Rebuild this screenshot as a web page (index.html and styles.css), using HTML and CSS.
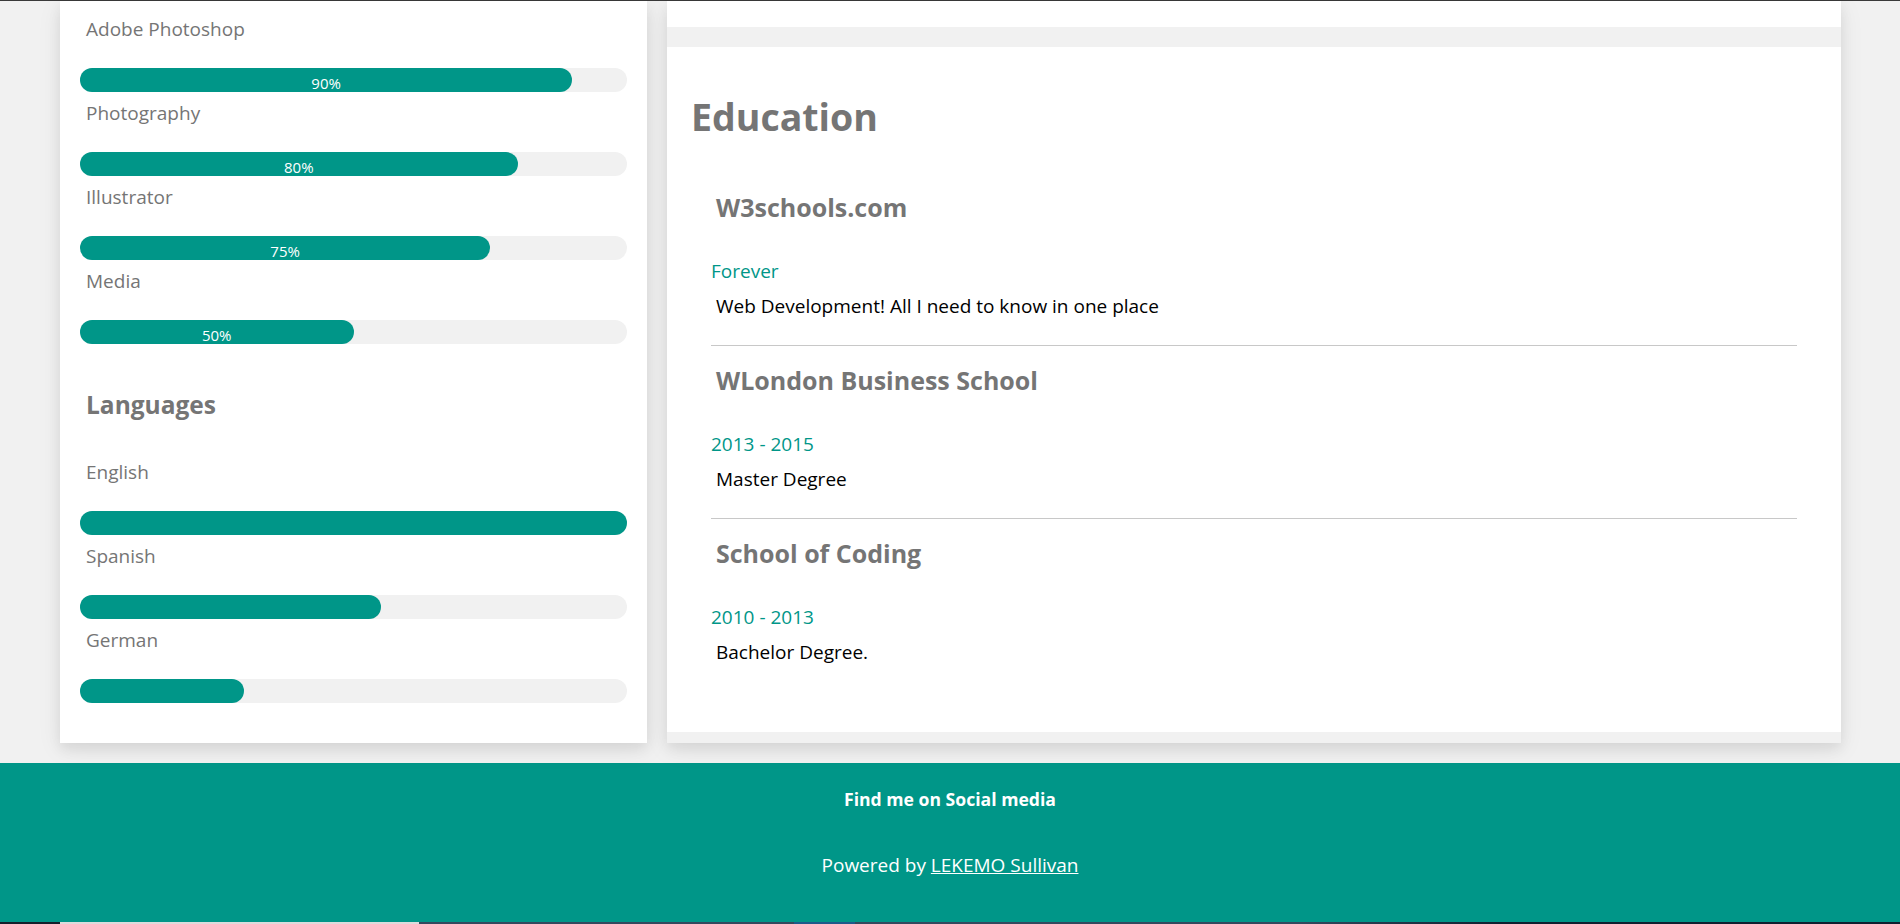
FILE: index.html
```html
<!DOCTYPE html>
<html lang="en">
<head>
<meta charset="utf-8">
<title>CV</title>
<link rel="stylesheet" href="styles.css">
</head>
<body>
<div class="topline"></div>
<main class="page">
  <section class="card side">
    <div class="skill">
      <p class="label">Adobe Photoshop</p>
      <div class="track"><div class="fill" style="width:90%">90%</div></div>
    </div>
    <div class="skill">
      <p class="label">Photography</p>
      <div class="track"><div class="fill" style="width:80%">80%</div></div>
    </div>
    <div class="skill">
      <p class="label">Illustrator</p>
      <div class="track"><div class="fill" style="width:75%">75%</div></div>
    </div>
    <div class="skill">
      <p class="label">Media</p>
      <div class="track"><div class="fill" style="width:50%">50%</div></div>
    </div>

    <h3 class="side-title">Languages</h3>
    <div class="skill">
      <p class="label">English</p>
      <div class="track"><div class="fill" style="width:100%"></div></div>
    </div>
    <div class="skill">
      <p class="label">Spanish</p>
      <div class="track"><div class="fill" style="width:55%"></div></div>
    </div>
    <div class="skill">
      <p class="label">German</p>
      <div class="track"><div class="fill" style="width:30%"></div></div>
    </div>
  </section>

  <section class="main-col">
    <div class="card-tail"></div>
    <div class="edu">
      <h2 class="edu-title">Education</h2>
      <div class="entries">
        <article class="entry">
          <h5 class="entry-title">W3schools.com</h5>
          <p class="date">Forever</p>
          <p class="desc">Web Development! All I need to know in one place</p>
        </article>
        <hr class="sep">
        <article class="entry">
          <h5 class="entry-title">WLondon Business School</h5>
          <p class="date">2013 - 2015</p>
          <p class="desc">Master Degree</p>
        </article>
        <hr class="sep">
        <article class="entry">
          <h5 class="entry-title">School of Coding</h5>
          <p class="date">2010 - 2013</p>
          <p class="desc">Bachelor Degree.</p>
        </article>
      </div>
    </div>
  </section>
</main>

<footer class="footer">
  <p class="find">Find me on Social media</p>
  <p class="powered">Powered by <a href="#" class="author">LEKEMO Sullivan</a></p>
</footer>
<div class="taskbar"></div>
</body>
</html>
```

FILE: styles.css
```css
* { box-sizing: border-box; }

html, body {
  margin: 0;
  padding: 0;
}

body {
  background: #f1f1f1;
  font-family: "Open Sans", "Segoe UI", Arial, sans-serif;
  font-size: 19px;
  color: #757575;
  overflow: hidden;
}

.topline {
  height: 1px;
  background: #3a3a3a;
}

.page {
  display: grid;
  grid-template-columns: 587px 1174px;
  column-gap: 20px;
  padding-left: 60px;
  align-items: start;
}

.card {
  background: #fff;
  box-shadow: 0 6px 12px 0 rgba(0,0,0,0.07), 0 6px 24px 0 rgba(0,0,0,0.07);
}

/* Left column */
.side {
  padding: 14px 20px 40px;
}

.label {
  margin: 0 0 25px;
  padding-left: 6px;
  font-size: 19px;
  line-height: 28px;
  color: #757575;
}

.skill + .skill .label {
  margin-top: 7px;
}

.track {
  height: 24px;
  background: #f1f1f1;
  border-radius: 12px;
}

.fill {
  height: 24px;
  background: #009688;
  border-radius: 12px;
  color: #fff;
  font-size: 15px;
  line-height: 24px;
  padding-top: 3px;
  text-align: center;
  white-space: nowrap;
}

.side-title {
  margin: 44px 0 36px;
  padding-left: 6px;
  font-size: 24.5px;
  line-height: 34px;
  font-weight: 700;
  color: #757575;
}

/* Right column */
.main-col {
  background: #f1f1f1;
  padding-bottom: 11px;
  box-shadow: 0 6px 12px 0 rgba(0,0,0,0.07), 0 6px 24px 0 rgba(0,0,0,0.07);
}

.card-tail {
  height: 26px;
  background: #fff;
}

.edu {
  margin-top: 20px;
  background: #fff;
  padding: 45px 24px 66px;
}

.edu-title {
  margin: 0 0 49px;
  font-size: 37.5px;
  line-height: 50px;
  font-weight: 700;
  color: #757575;
}

.entries {
  padding: 0 20px;
}

.entry-title {
  margin: 0;
  padding-left: 5px;
  font-size: 25px;
  line-height: 32px;
  font-weight: 700;
  color: #757575;
}

.date {
  margin: 34px 0 0;
  font-size: 19px;
  line-height: 28px;
  color: #009688;
}

.desc {
  margin: 7px 0 0;
  padding-left: 5px;
  font-size: 19px;
  line-height: 28px;
  color: #000;
}

.sep {
  margin: 25px 0 18px;
  height: 0;
  border: 0;
  border-top: 1px solid #c8c8c8;
}

/* Footer */
.footer {
  margin-top: 20px;
  height: 159px;
  background: #009688;
  color: #fff;
  text-align: center;
  padding-top: 23px;
}

.find {
  margin: 0;
  font-size: 17.6px;
  line-height: 26px;
  font-weight: 700;
}

.powered {
  margin: 39px 0 0;
  font-size: 19px;
  line-height: 28px;
}

.author {
  color: #fff;
  text-decoration: underline;
}

.taskbar {
  height: 2px;
  background: linear-gradient(to right,
    #14202c 0, #14202c 60px,
    #dcdcdc 60px, #dcdcdc 419px,
    #34495e 419px, #34495e 794px,
    #1e5a8a 794px, #1e5a8a 855px,
    #34495e 855px, #34495e 1300px,
    #0f2030 1500px, #0f2030 100%);
}
```
